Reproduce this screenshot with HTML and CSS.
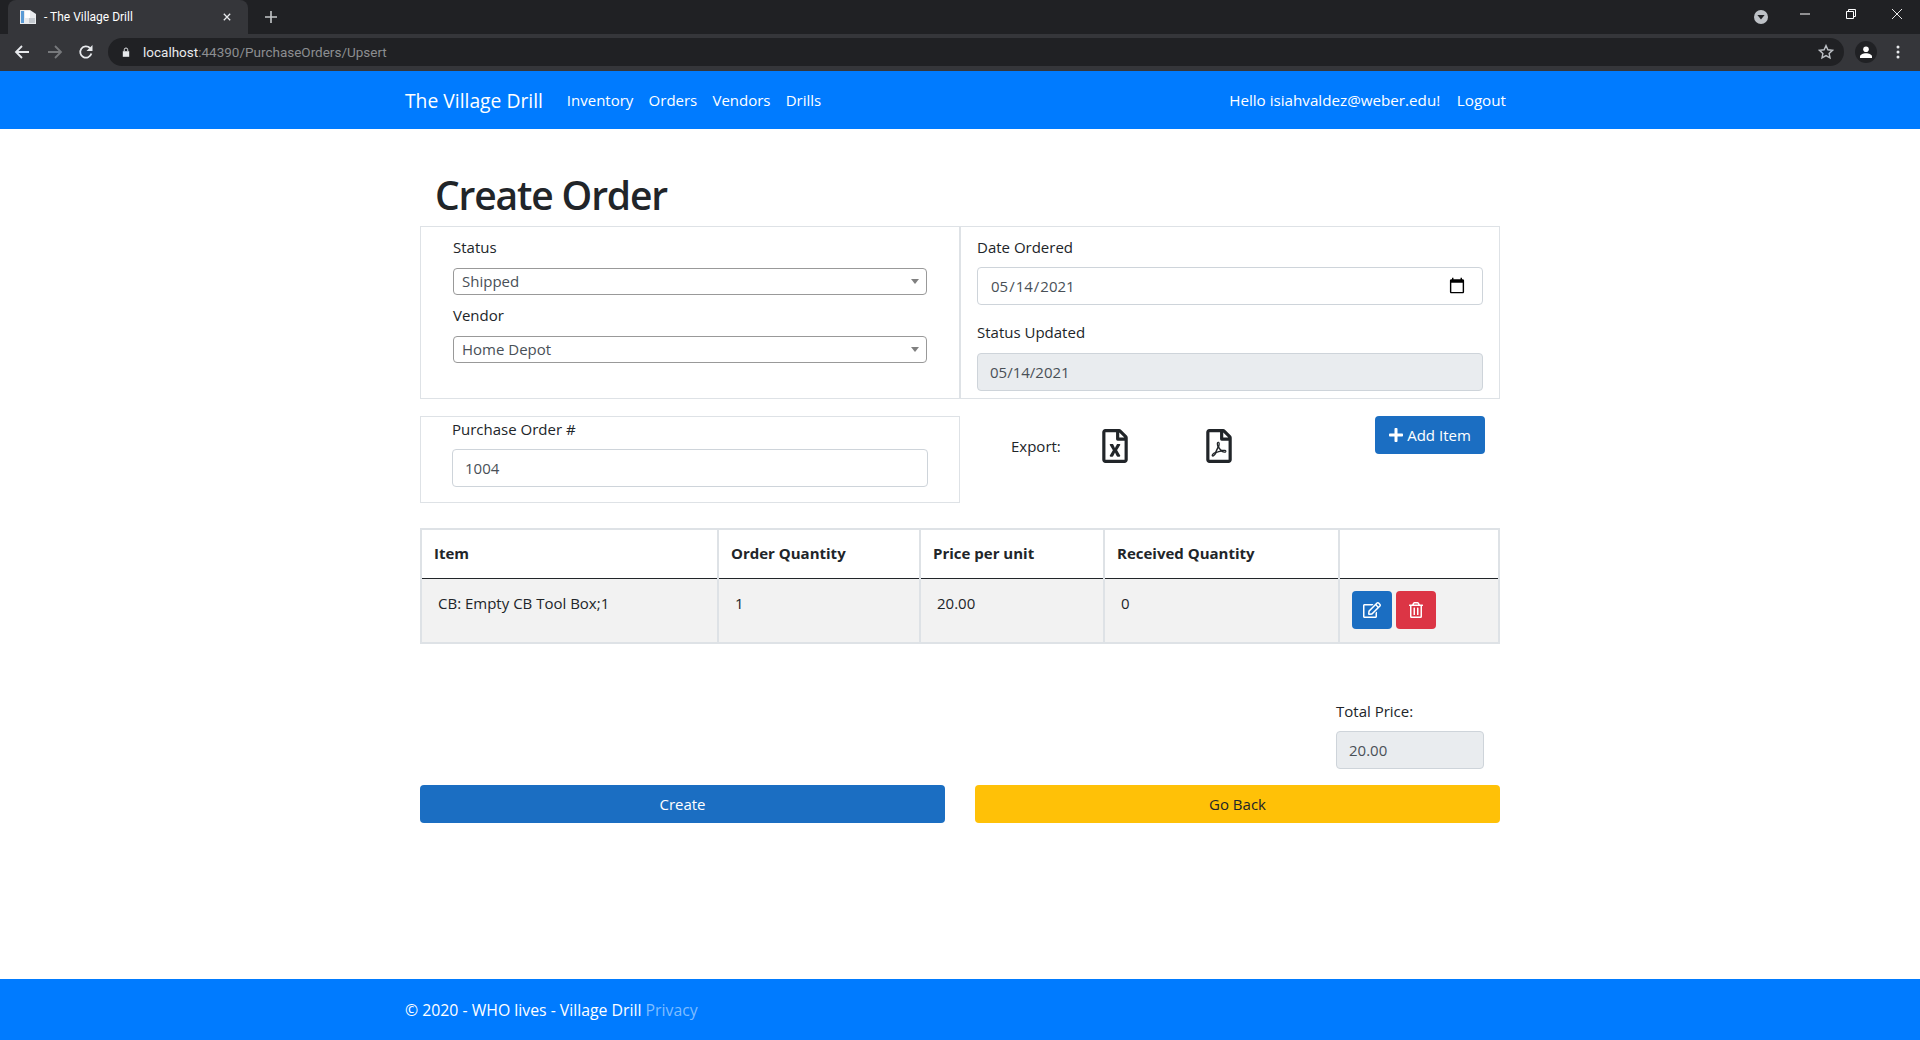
FILE: index.html
```html
<!DOCTYPE html>
<html lang="en">
<head>
<meta charset="utf-8">
<title>The Village Drill</title>
<link rel="stylesheet" href="styles.css">
</head>
<body>
<div class="browser">
  <div class="tabstrip">
    <div class="tab">
      <svg class="favicon" viewBox="0 0 16 16"><path fill="#e8eaed" d="M0 1h10l6 4v10H0z"/><path fill="#5b9bd5" d="M1 2h3v12H1z"/><path fill="#fff" d="M5 2h5v7H5z"/><path fill="#c4c9cf" d="M9 9h6v5H9z"/></svg>
      <span class="tab-title">- The Village Drill</span>
      <svg class="tab-x" viewBox="0 0 10 10"><path d="M1 1l8 8M9 1l-8 8" stroke="#e8eaed" stroke-width="1.6"/></svg>
    </div>
    <svg class="newtab" viewBox="0 0 12 12"><path d="M6 0v12M0 6h12" stroke="#c4c7c9" stroke-width="1.6"/></svg>
    <div class="winctl">
      <svg class="profile-drop" viewBox="0 0 14 14"><circle cx="7" cy="7" r="7" fill="#bdc1c6"/><path d="M3.4 5h7.2L7 9.6z" fill="#202124"/></svg>
      <svg class="ctl ctl-min" viewBox="0 0 10 10"><path d="M0 5h10" stroke="#fff"/></svg>
      <svg class="ctl ctl-res" viewBox="0 0 10 10"><path d="M.5 2.5h7v7h-7zM2.5 2.5v-2h7v7h-2" fill="none" stroke="#fff"/></svg>
      <svg class="ctl ctl-x" viewBox="0 0 10 10"><path d="M0 0l10 10M10 0L0 10" stroke="#fff" stroke-width=".9"/></svg>
    </div>
  </div>
  <div class="toolbar">
    <svg class="tool tool-back" viewBox="0 0 16 16"><path d="M15 8H2M8 2L2 8l6 6" fill="none" stroke="#e8eaed" stroke-width="1.8"/></svg>
    <svg class="tool tool-fwd" viewBox="0 0 16 16"><path d="M1 8h13M8 2l6 6-6 6" fill="none" stroke="#77797c" stroke-width="1.8"/></svg>
    <svg class="tool tool-reload" viewBox="0 0 16 16"><path d="M13.4 9.6A5.7 5.7 0 1 1 12 4" fill="none" stroke="#e8eaed" stroke-width="1.8"/><path d="M14.5 1v6h-6z" fill="#e8eaed"/></svg>
    <div class="omnibox">
      <svg class="lock" viewBox="0 0 10 12"><path d="M1 5h8v7H1z" fill="#e8eaed"/><path d="M2.8 5V3.2a2.2 2.2 0 0 1 4.4 0V5" fill="none" stroke="#e8eaed" stroke-width="1.2"/></svg>
      <span class="url"><span class="url-host">localhost</span>:44390/PurchaseOrders/Upsert</span>
      <svg class="star" viewBox="0 0 16 16"><path d="M8 1.6l1.9 4.2 4.6.5-3.4 3.1.9 4.5L8 11.6l-4 2.3.9-4.5L1.5 6.3l4.6-.5z" fill="none" stroke="#bdc1c6" stroke-width="1.4"/></svg>
    </div>
    <div class="avatar"><svg viewBox="0 0 12 12"><circle cx="6" cy="3.2" r="2.8" fill="#fff"/><path d="M0 12v-1.6C0 8.600 3 7.200 6 7.200s6 1.400 6 3.200V12z" fill="#fff"/></svg></div>
    <svg class="kebab" viewBox="0 0 4 14"><circle cx="2" cy="2" r="1.500" fill="#e8eaed"/><circle cx="2" cy="7" r="1.500" fill="#e8eaed"/><circle cx="2" cy="12" r="1.500" fill="#e8eaed"/></svg>
  </div>
</div>

<div class="page">
  <nav class="navbar">
    <div class="container nav-inner">
      <a class="brand" href="#">The Village Drill</a>
      <a class="nav-link" href="#">Inventory</a>
      <a class="nav-link" href="#">Orders</a>
      <a class="nav-link" href="#">Vendors</a>
      <a class="nav-link" href="#">Drills</a>
      <span class="nav-spacer"></span>
      <a class="nav-link hello" href="#">Hello isiahvaldez@weber.edu!</a>
      <a class="nav-link logout" href="#">Logout</a>
    </div>
  </nav>

  <main class="container main">
    <h1 class="title">Create Order</h1>

    <div class="row-boxes">
      <div class="box box-left">
        <label class="lab">Status</label>
        <div class="select"><span>Shipped</span></div>
        <label class="lab lab-vendor">Vendor</label>
        <div class="select"><span>Home Depot</span></div>
      </div>
      <div class="box box-right">
        <label class="lab">Date Ordered</label>
        <input class="input" type="date" value="2021-05-14">
        <label class="lab lab-updated">Status Updated</label>
        <input class="input input-dis" type="text" value="05/14/2021" disabled>
      </div>
    </div>

    <div class="row-po">
      <div class="box box-po">
        <label class="lab lab-po">Purchase Order #</label>
        <input class="input" type="text" value="1004">
      </div>
      <div class="export">
        <span class="export-label">Export:</span>
        <svg class="file-icon file-x" viewBox="0 0 384 512"><path fill="#212529" d="M369.9 97.9L286 14C277 5 264.8-.1 252.1-.1H48C21.5 0 0 21.5 0 48v416c0 26.5 21.5 48 48 48h288c26.5 0 48-21.5 48-48V131.9c0-12.7-5.1-25-14.1-34zM332.1 128H256V51.9l76.1 76.1zM48 464V48h160v104c0 13.3 10.7 24 24 24h104v288H48zm212-240h-28.8c-4.4 0-8.4 2.4-10.5 6.3-18 33.1-22.2 42.4-28.6 57.7-13.9-29.1-6.9-17.3-28.6-57.7-2.1-3.9-6.2-6.3-10.6-6.3H124c-9.3 0-15 10-10.4 18l46.3 78-46.3 78c-4.7 8 1.1 18 10.4 18h28.9c4.4 0 8.4-2.4 10.5-6.3 21.7-40 23-45 28.6-57.7 14.9 30.2 5.9 15.900 28.6 57.7 2.1 3.9 6.2 6.3 10.6 6.3H260c9.3 0 15-10 10.4-18L224 320c.7-1.1 30.3-50.5 46.3-78 4.7-8-1.1-18-10.3-18z"/></svg>
        <svg class="file-icon" viewBox="0 0 384 512"><path fill="#212529" d="M369.9 97.9L286 14C277 5 264.8-.1 252.1-.1H48C21.5 0 0 21.5 0 48v416c0 26.5 21.5 48 48 48h288c26.5 0 48-21.5 48-48V131.9c0-12.7-5.1-25-14.1-34zM332.1 128H256V51.9l76.1 76.1zM48 464V48h160v104c0 13.3 10.7 24 24 24h104v288H48zm250.2-143.7c-12.2-12-47-8.7-64.4-6.5-17.2-10.5-28.7-25-36.8-46.3 3.9-16.1 10.1-40.6 5.4-56-4.2-26.2-37.8-23.6-42.6-5.9-4.4 16.1-.4 38.5 7 67.1-10 23.9-24.9 56-35.4 74.4-20 10.3-47 26.2-51 46.2-3.3 15.8 26 55.2 76.1-31.2 22.4-7.4 46.8-16.5 68.4-20.1 18.9 10.2 41 17 55.800 17 25.5 0 28-28.2 17.5-38.7zm-198.1 77.8c5.1-13.7 24.5-29.5 30.4-35-19 30.3-30.4 35.7-30.4 35zm81.6-190.6c7.4 0 6.7 32.1 1.8 40.8-4.4-13.9-4.3-40.8-1.8-40.8zm-24.4 136.6c9.7-16.9 18-37 24.7-54.7 8.3 15.1 18.9 27.2 30.1 35.5-20.8 4.3-38.9 13.1-54.8 19.2zm131.6-5s-5 6-37.3-7.8c35.1-2.6 40.9 5.4 37.3 7.8z"/></svg>
      </div>
      <button class="btn btn-add"><svg class="plus" viewBox="0 0 448 512"><path fill="#fff" d="M416 208H272V64c0-17.67-14.33-32-32-32h-32c-17.67 0-32 14.33-32 32v144H32c-17.67 0-32 14.33-32 32v32c0 17.67 14.33 32 32 32h144v144c0 17.67 14.33 32 32 32h32c17.67 0 32-14.33 32-32V304h144c17.67 0 32-14.33 32-32v-32c0-17.67-14.33-32-32-32z"/></svg>Add Item</button>
    </div>

    <table class="items">
      <colgroup><col class="c1"><col class="c2"><col class="c3"><col class="c4"><col class="c5"></colgroup>
      <thead>
        <tr><th>Item</th><th>Order Quantity</th><th>Price per unit</th><th>Received Quantity</th><th></th></tr>
      </thead>
      <tbody>
        <tr>
          <td>CB: Empty CB Tool Box;1</td>
          <td>1</td>
          <td>20.00</td>
          <td>0</td>
          <td class="actions">
            <button class="btn btn-sq btn-edit"><svg viewBox="0 0 576 512"><path fill="#fff" d="M402.3 344.9l32-32c5-5 13.7-1.5 13.7 5.7V464c0 26.5-21.5 48-48 48H48c-26.5 0-48-21.5-48-48V112c0-26.5 21.5-48 48-48h273.5c7.1 0 10.7 8.6 5.7 13.7l-32 32c-1.5 1.5-3.5 2.3-5.7 2.3H48v352h352V350.5c0-2.1.8-4.1 2.3-5.6zm156.6-201.8L296.3 405.7l-90.4 10c-26.2 2.9-48.5-19.2-45.6-45.6l10-90.4L432.9 17.1c22.9-22.9 59.9-22.9 82.7 0l43.2 43.2c22.9 22.9 22.9 60 .1 82.8zM460.1 174L402 115.9 216.2 301.8l-7.3 65.3 65.3-7.3L460.1 174zm64.8-79.7l-43.2-43.2c-4.1-4.1-10.8-4.1-14.8 0L436 82l58.1 58.1 30.9-30.9c4-4.2 4-10.8-.1-14.9z"/></svg></button>
            <button class="btn btn-sq btn-del"><svg viewBox="0 0 448 512"><path fill="#fff" d="M268 416h24a12 12 0 0 0 12-12V188a12 12 0 0 0-12-12h-24a12 12 0 0 0-12 12v216a12 12 0 0 0 12 12zM432 80h-82.41l-34-56.7A48 48 0 0 0 274.410 0H173.590a48 48 0 0 0-41.16 23.3L98.410 80H16A16 16 0 0 0 0 96v16a16 16 0 0 0 16 16h16v336a48 48 0 0 0 48 48h288a48 48 0 0 0 48-48V128h16a16 16 0 0 0 16-16V96a16 16 0 0 0-16-16zM171.840 50.910A6 6 0 0 1 177 48h94a6 6 0 0 1 5.150 2.910L293.610 80H154.390zM368 464H80V128h288zm-212-48h24a12 12 0 0 0 12-12V188a12 12 0 0 0-12-12h-24a12 12 0 0 0-12 12v216a12 12 0 0 0 12 12z"/></svg></button>
          </td>
        </tr>
      </tbody>
    </table>

    <div class="total">
      <div class="total-inner">
        <label class="lab">Total Price:</label>
        <input class="input input-dis" type="text" value="20.00" disabled>
      </div>
    </div>

    <div class="actions-row">
      <button class="btn btn-create">Create</button>
      <button class="btn btn-back">Go Back</button>
    </div>
  </main>

  <footer class="footer">
    <div class="container">© 2020 - WHO lives - Village Drill <a class="privacy" href="#">Privacy</a></div>
  </footer>
</div>
</body>
</html>
```

FILE: styles.css
```css
* { box-sizing: border-box; }
html, body { margin: 0; height: 100%; }
body {
  display: flex;
  flex-direction: column;
  height: 1040px;
  overflow: hidden;
  font-family: "Open Sans", "Noto Sans", sans-serif;
  font-size: 15px;
  color: #212529;
  background: #fff;
}
svg { display: block; }

/* browser chrome */
.browser { flex: none; height: 71px; background: #35363a; font-family: "Roboto", "Liberation Sans", sans-serif; }
.tabstrip { height: 34px; background: #202124; display: flex; align-items: flex-end; }
.tab { width: 240px; height: 34px; margin-left: 8px; padding: 0 12px 0 12px; background: #35363a; border-radius: 8px 8px 0 0; display: flex; align-items: center; color: #fff; font-size: 12px; }
.favicon { width: 16px; height: 16px; margin-right: 8px; }
.tab-title { flex: 1; }
.tab-x { width: 8px; height: 8px; margin-right: 5px; }
.newtab { width: 12px; height: 12px; margin: 0 0 11px 17px; }
.winctl { margin-left: auto; height: 34px; display: flex; align-items: flex-start; }
.profile-drop { width: 14px; height: 14px; margin: 10px 32px 0 0; }
.ctl { width: 10px; height: 10px; margin-top: 9px; }
.ctl-min { margin-right: 36px; }
.ctl-res { margin-right: 36px; }
.ctl-x { margin-right: 18px; }
.toolbar { height: 37px; display: flex; align-items: center; }
.tool { width: 16px; height: 16px; margin-bottom: 1px; }
.tool-back { margin-left: 14px; }
.tool-fwd { margin-left: 17px; }
.tool-reload { margin-left: 15px; }
.omnibox { width: 1736px; height: 28px; margin: 0 0 1px 14px; padding: 0 10px 0 14px; background: #202124; border-radius: 14px; display: flex; align-items: center; font-size: 13.500px; color: #8c8e91; }
.lock { width: 8px; height: 10px; margin-right: 13px; }
.url { flex: 1; }
.url-host { color: #e8eaed; }
.star { width: 16px; height: 16px; }
.avatar { width: 22px; height: 22px; margin: 0 0 1px 11px; padding: 5px; background: #202124; border-radius: 50%; }
.kebab { width: 4px; height: 14px; margin: 0 0 1px 19px; }

/* page */
.page { flex: 1; display: flex; flex-direction: column; min-height: 0; }
.container { width: 1140px; margin: 0 auto; padding: 0 15px; }
.navbar { flex: none; height: 58px; background: #007bff; color: #fff; display: flex; }
.nav-inner { display: flex; align-items: center; padding-right: 16px; }
.navbar a { color: #fff; text-decoration: none; }
.brand { font-size: 19.300px; margin-right: 16.400px; }
.nav-link { padding: 8px 7.600px; }
.hello { font-size: 15.200px; margin-right: 1px; }
.logout { font-size: 15.200px; padding: 8px; }
.nav-spacer { flex: 1; }

.main { flex: 1; padding-top: 0; }
.title { margin: 0; padding: 39px 0 0 30px; height: 97px; font-size: 39px; line-height: 54px; font-weight: 600; letter-spacing: -1.150px; }
.row-boxes { display: flex; margin: 0 15px; height: 173px; }
.box { border: 1px solid #dee2e6; }
.box-left { width: 540px; padding: 7px 32px 0 32px; }
.box-right { width: 540px; padding: 7px 16px 0 16px; }
.lab { display: block; line-height: 24px; }
.box-left .lab { height: 33px; margin-top: 1px; }
.box-left .lab-vendor { margin-top: 0; height: 41px; padding-top: 8px; }
.select { position: relative; height: 27px; padding-left: 8px; border: 1px solid #999; border-radius: 4px; line-height: 25px; color: #495057; background: #fff; }
.select::after { content: ""; position: absolute; right: 7px; top: 10px; border: 4px solid transparent; border-top: 5px solid #808080; border-bottom: 0; }
.box-right .lab { height: 32px; margin-top: 1px; }
.box-right .lab-updated { height: 48px; padding-top: 15px; margin-top: 0; }
.input { display: block; width: 100%; height: 38px; padding: 0 12px; border: 1px solid #ced4da; border-radius: 4px; font: inherit; color: #495057; background: #fff; }
.input-dis { background: #e9ecef; }
.input::-webkit-calendar-picker-indicator { width: 18px; height: 18px; padding: 0; margin-right: 4px; }

.row-po { display: flex; align-items: flex-start; margin: 17px 15px 0; height: 87px; }
.box-po { width: 540px; height: 87px; padding: 0 31px; }
.lab-po { height: 32px; }
.export { width: 415px; display: flex; align-items: center; height: 60px; padding-left: 51px; }
.export-label { width: 91px; }
.file-icon { width: 26px; height: 34px; margin-right: 78px; }
.btn { border: 0; border-radius: 4px; font: inherit; color: #fff; cursor: pointer; }
.btn-add { display: flex; align-items: center; justify-content: center; width: 110px; height: 38px; background: #1b6ec2; }
.plus { width: 14px; height: 16px; margin-right: 4px; }

.items { margin: 25px 15px 0; width: 1078px; table-layout: fixed; border-collapse: collapse; }
.c1 { width: 297px; } .c2 { width: 202px; } .c3 { width: 184px; } .c4 { width: 235px; } .c5 { width: 160px; }
.items th { height: 49px; padding: 0 12px 1px; text-align: left; font-weight: 700; border: 2px solid #dee2e6; border-bottom: 1px solid #212529; }
.items td { height: 65px; padding: 14px 16px 12px; vertical-align: top; background: #f2f2f2; border: 2px solid #dee2e6; border-top: 0; }
.items td.actions { padding: 0 12px 1px; vertical-align: middle; }
.btn-sq { display: inline-flex; align-items: center; justify-content: center; width: 40px; height: 38px; vertical-align: middle; }
.btn-sq svg { width: 18px; height: 16px; }
.btn-edit { background: #1b6ec2; }
.btn-del { background: #dc3545; }

.total { display: flex; justify-content: flex-end; margin: 0 15px; }
.total-inner { width: 148px; margin-right: 16px; margin-top: 55px; }
.total-inner .lab { height: 32px; }
.actions-row { display: flex; justify-content: space-between; margin: 16px 15px 0; }
.btn-create, .btn-back { width: 525px; height: 38px; }
.btn-create { background: #1b6ec2; }
.btn-back { background: #ffc107; color: #212529; }

.footer { flex: none; height: 61px; background: #007bff; color: #fff; display: flex; align-items: center; font-size: 15.800px; }
.privacy { color: #7fbdff; text-decoration: none; }
```
